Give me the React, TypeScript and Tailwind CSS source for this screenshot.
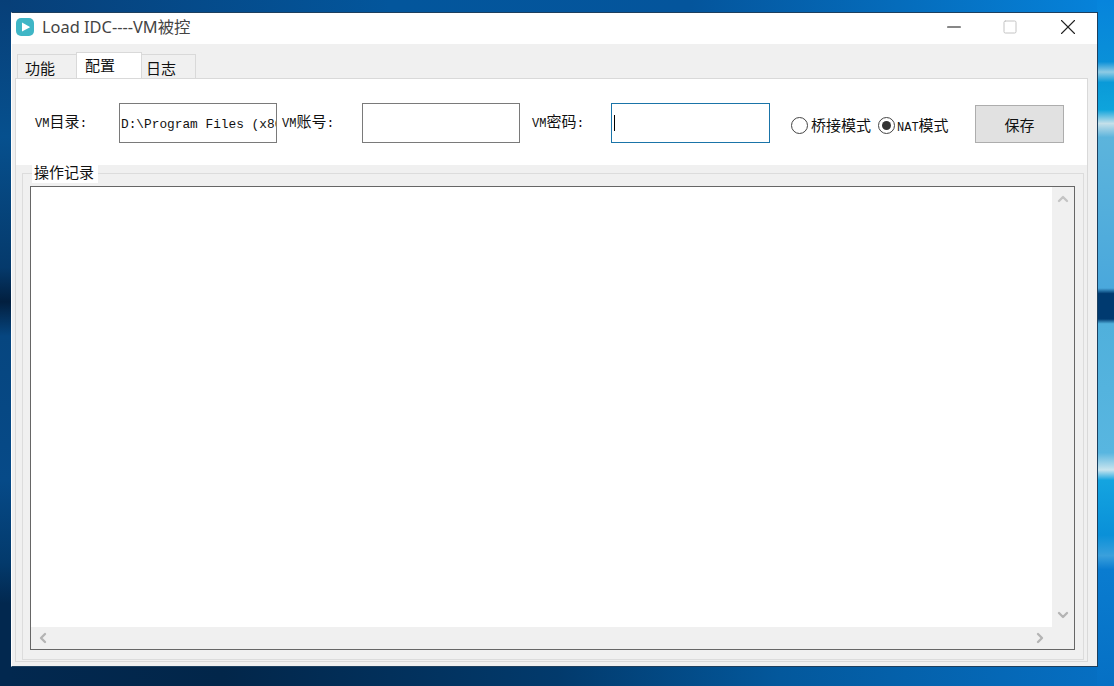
import { ChevronDown, ChevronLeft, ChevronRight, ChevronUp, Minus, Square, X } from 'lucide-react';

const mono = "font-['Liberation_Mono','Noto_Sans_CJK_SC',monospace]";

function Wallpaper() {
  return (
    <svg className="absolute inset-0" width="1114" height="686" viewBox="0 0 1114 686">
      <defs>
        <linearGradient id="top" x1="0" x2="1" y1="0" y2="0">
          <stop offset="0" stopColor="#073f78" />
          <stop offset="0.35" stopColor="#03569c" />
          <stop offset="0.62" stopColor="#04559c" />
          <stop offset="1" stopColor="#0684dc" />
        </linearGradient>
        <linearGradient id="bottom" x1="0" x2="1" y1="0" y2="0">
          <stop offset="0" stopColor="#02284f" />
          <stop offset="0.2" stopColor="#02264a" />
          <stop offset="0.5" stopColor="#023a6c" />
          <stop offset="0.7" stopColor="#03589c" />
          <stop offset="1" stopColor="#0670c4" />
        </linearGradient>
        <linearGradient id="left" x1="0" x2="0" y1="0" y2="1">
          <stop offset="0" stopColor="#073f78" />
          <stop offset="0.2" stopColor="#06508e" />
          <stop offset="0.39" stopColor="#053a6c" />
          <stop offset="0.44" stopColor="#021f3f" />
          <stop offset="0.49" stopColor="#064680" />
          <stop offset="0.7" stopColor="#064a88" />
          <stop offset="0.82" stopColor="#033a6c" />
          <stop offset="0.88" stopColor="#02284f" />
          <stop offset="1" stopColor="#02284f" />
        </linearGradient>
        <linearGradient id="right" x1="0" x2="0" y1="0" y2="1">
          <stop offset="0" stopColor="#0684dc" />
          <stop offset="0.09" stopColor="#0a90d8" />
          <stop offset="0.105" stopColor="#8ecbe4" />
          <stop offset="0.12" stopColor="#0a9ad8" />
          <stop offset="0.16" stopColor="#0ea4dc" />
          <stop offset="0.18" stopColor="#c4e0ea" />
          <stop offset="0.2" stopColor="#5cb4dc" />
          <stop offset="0.42" stopColor="#4aa8dc" />
          <stop offset="0.428" stopColor="#003a70" />
          <stop offset="0.465" stopColor="#003a70" />
          <stop offset="0.472" stopColor="#50b0dc" />
          <stop offset="0.66" stopColor="#58b6e0" />
          <stop offset="0.685" stopColor="#c8e4ee" />
          <stop offset="0.7" stopColor="#14a4e0" />
          <stop offset="0.78" stopColor="#0a90d8" />
          <stop offset="0.81" stopColor="#3aa0dc" />
          <stop offset="0.83" stopColor="#0a7cd0" />
          <stop offset="1" stopColor="#0670c4" />
        </linearGradient>
      </defs>
      <rect x="0" y="0" width="1114" height="13" fill="url(#top)" />
      <rect x="0" y="664" width="1114" height="22" fill="url(#bottom)" />
      <rect x="0" y="0" width="11" height="686" fill="url(#left)" />
      <rect x="1097" y="0" width="17" height="686" fill="url(#right)" />
    </svg>
  );
}

function FieldLabel({ latin, cjk, className }: { latin: string; cjk: string; className: string }) {
  return (
    <span className={`${mono} text-[13px] leading-[42px] text-[#111] whitespace-nowrap ${className}`}>
      <span className="text-[12px]">{latin}</span>
      <span className="text-[15px]">{cjk}</span>
      <span className="text-[13px]">:</span>
    </span>
  );
}

function Radio({ checked }: { checked?: boolean }) {
  return (
    <span className="w-[17px] h-[17px] shrink-0 rounded-full border-[1.5px] border-[#444] bg-white flex items-center justify-center">
      {checked && <span className="w-[9px] h-[9px] rounded-full bg-[#333]" />}
    </span>
  );
}

export default function App() {
  return (
    <div className="relative w-[1114px] h-[686px] overflow-hidden bg-[#0a5ca8] pt-[12px] pl-[11px]">
      <Wallpaper />
      <div className="relative w-[1087px] h-[655px] border border-[#1d3f5e] border-l-white bg-[#f0f0f0] flex flex-col">
        {/* title bar */}
        <div className="h-[31px] shrink-0 bg-white flex items-center pb-[3px]">
          <svg className="ml-[4px]" width="19" height="19" viewBox="0 0 19 19">
            <rect x="0" y="0" width="18" height="18" rx="5" fill="#3fb6c6" />
            <path d="M6 4.6 L13.6 8.8 Q14.2 9.2 13.6 9.6 L6 13.6 Z" fill="#fff" />
          </svg>
          <span className="ml-[7px] text-[16.4px] text-[#444] font-['Noto_Sans','Noto_Sans_CJK_SC',sans-serif] whitespace-nowrap">
            Load IDC----VM被控
          </span>
          <div className="ml-auto flex items-center">
            <Minus size={22} strokeWidth={1.1} className="text-[#111] mr-[37px]" />
            <Square size={16} strokeWidth={1.5} className="text-[#c4c4c4] mr-[37px]" />
            <X size={26} strokeWidth={1} className="text-[#222] mr-[16px]" />
          </div>
        </div>

        {/* tabs */}
        <div className="h-[34px] shrink-0 flex items-end pl-[5px] text-[15px] text-[#111] font-['Noto_Sans_CJK_SC',sans-serif]">
          <div className="w-[60px] h-[24px] bg-[#f0f0f0] border border-b-0 border-[#d9d9d9] leading-[26px] pl-[7px]">功能</div>
          <div className="w-[66px] h-[26px] -ml-px bg-white border border-b-0 border-[#d9d9d9] leading-[24px] pl-[8px]">配置</div>
          <div className="w-[55px] h-[24px] -ml-px bg-[#f0f0f0] border border-b-0 border-[#d9d9d9] leading-[26px] pl-[4px]">日志</div>
        </div>

        {/* tab page */}
        <div className="ml-[3px] w-[1073px] h-[584px] shrink-0 border border-[#d9d9d9] flex flex-col">
          <div className="h-[86px] shrink-0 bg-white flex items-start pt-[24px] pl-[19px]">
            <FieldLabel latin="VM" cjk="目录" className="w-[84px]" />
            <div className={`w-[158px] h-[40px] shrink-0 border border-[#7a7a7a] overflow-hidden ${mono} text-[12.8px] leading-[41px] pl-[1px] text-[#111] whitespace-nowrap`}>
              D:\Program Files (x86
            </div>
            <FieldLabel latin="VM" cjk="账号" className="w-[80px] ml-[5px]" />
            <div className="w-[158px] h-[40px] shrink-0 border border-[#7a7a7a]" />
            <FieldLabel latin="VM" cjk="密码" className="w-[79px] ml-[12px]" />
            <div className="w-[159px] h-[40px] shrink-0 border-[1.5px] border-[#1a74a8] flex items-center pl-[2px]">
              <span className="w-px h-[16px] bg-black" />
            </div>
            <div className="ml-[21px] mt-[2px] h-[40px] flex items-center text-[15px] text-[#111] font-['Noto_Sans_CJK_SC',sans-serif] whitespace-nowrap">
              <Radio />
              <span className="ml-[3px] w-[61px]">桥接模式</span>
              <span className="ml-[6px]"><Radio checked /></span>
              <span className="ml-[2px] w-[53px]">
                <span className={`${mono} text-[12px]`}>NAT</span>模式
              </span>
            </div>
            <button className="ml-[25px] mt-[2px] w-[89px] h-[38px] pt-[2px] bg-[#e1e1e1] border border-[#adadad] text-[15px] text-[#111] font-['Noto_Sans_CJK_SC',sans-serif]">
              保存
            </button>
          </div>

          {/* group box */}
          <div className="relative ml-[6px] mt-[8px] w-[1062px] h-[487px] border border-[#dcdcdc] pt-[12px] pl-[7px]">
            <span className="absolute left-[9px] -top-[9px] w-[66px] h-[18px] bg-white pl-[2px] text-[15px] leading-[13px] text-[#111] font-['Noto_Sans_CJK_SC',sans-serif]">
              操作记录
            </span>
            <div className="w-[1045px] h-[464px] border border-[#666] bg-white grid grid-cols-[1fr_22px] grid-rows-[1fr_22px]">
              <div />
              <div className="bg-[#f0f0f0] flex flex-col items-center justify-between py-[4px]">
                <ChevronUp size={16} strokeWidth={3.5} className="text-[#c4c4c4]" />
                <ChevronDown size={16} strokeWidth={3.5} className="text-[#b4b4b4]" />
              </div>
              <div className="bg-[#f0f0f0] flex items-center justify-between px-[4px]">
                <ChevronLeft size={16} strokeWidth={3.5} className="text-[#b4b4b4]" />
                <ChevronRight size={16} strokeWidth={3.5} className="text-[#b4b4b4]" />
              </div>
              <div className="bg-[#f0f0f0]" />
            </div>
          </div>
        </div>
      </div>
    </div>
  );
}
